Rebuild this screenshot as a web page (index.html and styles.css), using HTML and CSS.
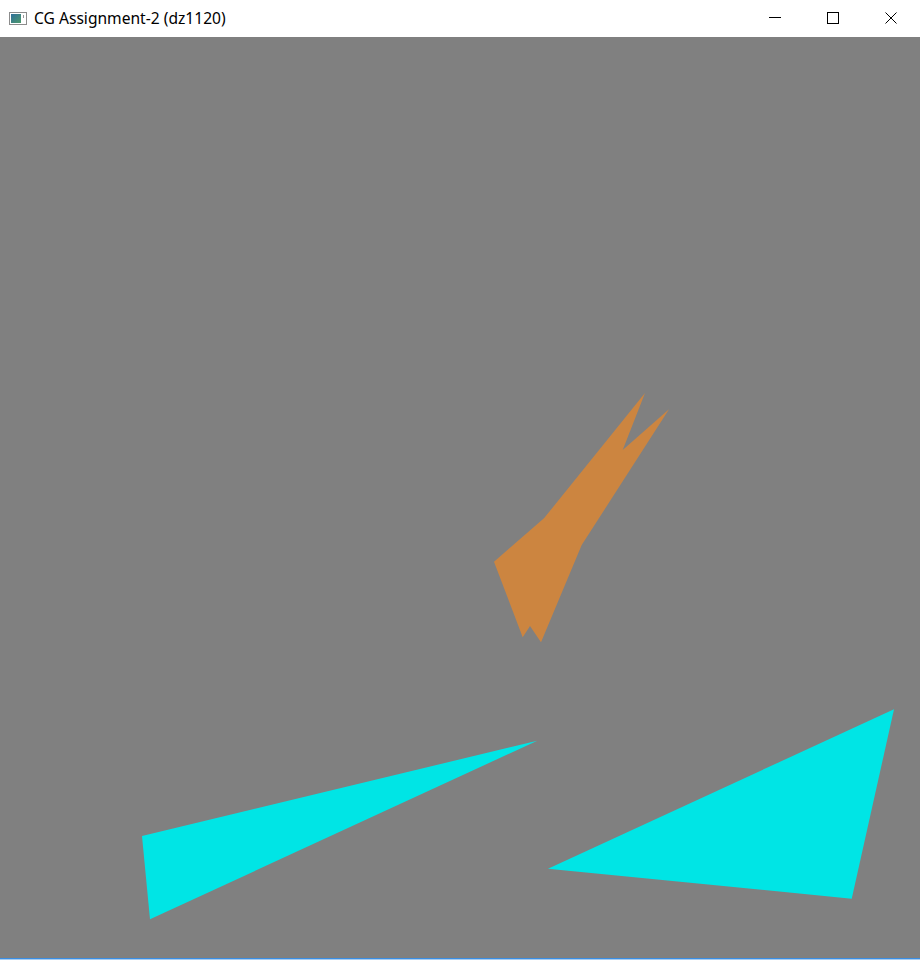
FILE: index.html
```html
<!DOCTYPE html>
<html>
<head>
<meta charset="utf-8">
<title>CG Assignment-2 (dz1120)</title>
<link rel="stylesheet" href="styles.css">
</head>
<body>
<div class="window">
  <div class="titlebar">
    <svg class="app-icon" width="18" height="13" viewBox="0 0 18 13">
      <defs>
        <linearGradient id="g" x1="0" y1="0" x2="1" y2="1">
          <stop offset="0" stop-color="#2f6f9a"/>
          <stop offset="1" stop-color="#4e9a6c"/>
        </linearGradient>
      </defs>
      <rect x="0.5" y="0.5" width="17" height="12" fill="#fff" stroke="#8c8c8c"/>
      <rect x="2" y="2" width="10" height="9" fill="url(#g)"/>
      <rect x="14" y="3" width="1" height="3" fill="#9a9a9a"/>
    </svg>
    <span class="title">CG Assignment-2 (dz1120)</span>
    <div class="controls">
      <div class="ctl">
        <svg width="12" height="12" viewBox="0 0 12 12"><path d="M0 5.5H12" stroke="#000" stroke-width="1"/></svg>
      </div>
      <div class="ctl">
        <svg width="12" height="12" viewBox="0 0 12 12"><rect x="0.5" y="0.5" width="11" height="11" fill="none" stroke="#000" stroke-width="1"/></svg>
      </div>
      <div class="ctl">
        <svg width="12" height="12" viewBox="0 0 12 12"><path d="M0.5 0.5L11.5 11.5M11.5 0.5L0.5 11.5" stroke="#000" stroke-width="1"/></svg>
      </div>
    </div>
  </div>
  <div class="canvas">
    <svg class="scene" width="920" height="921" viewBox="0 0 920 921">
      <polygon class="orange" points="645,356 622.7,413 669,372.3 581.7,508 541,605.3 530,589 522.7,600.3 494,524.7 544,481.3"/>
      <polygon class="cyan" points="142,799 537.3,703.7 150,882.3"/>
      <polygon class="cyan" points="894,672.3 548,831.7 851.7,861.7"/>
    </svg>
  </div>
  <div class="border-bottom"></div>
</div>
</body>
</html>
```
FILE: styles.css
```css
html, body {
  margin: 0;
  padding: 0;
  background: #ffffff;
}
.window {
  width: 920px;
  height: 960px;
  display: flex;
  flex-direction: column;
  overflow: hidden;
}
.titlebar {
  height: 37px;
  flex: none;
  display: flex;
  align-items: center;
  background: #ffffff;
  font-family: "Noto Sans", "Segoe UI", sans-serif;
}
.app-icon {
  margin-left: 9px;
  margin-right: 7px;
  margin-top: -1px;
}
.title {
  font-size: 15.6px;
  color: #000;
  letter-spacing: 0;
  margin-top: -1px;
}
.controls {
  margin-left: auto;
  display: flex;
  height: 100%;
}
.ctl {
  width: 58px;
  height: 100%;
  display: flex;
  align-items: center;
  justify-content: center;
}
.ctl svg {
  margin-top: -1px;
}
.canvas {
  height: 921px;
  flex: none;
  background: #808080;
}
.scene {
  display: block;
}
.orange {
  fill: #cc8540;
}
.cyan {
  fill: #00e5e5;
}
.border-bottom {
  height: 1px;
  flex: none;
  background: #3a8de2;
  border-bottom: 1px solid #a8cdf2;
}
```
